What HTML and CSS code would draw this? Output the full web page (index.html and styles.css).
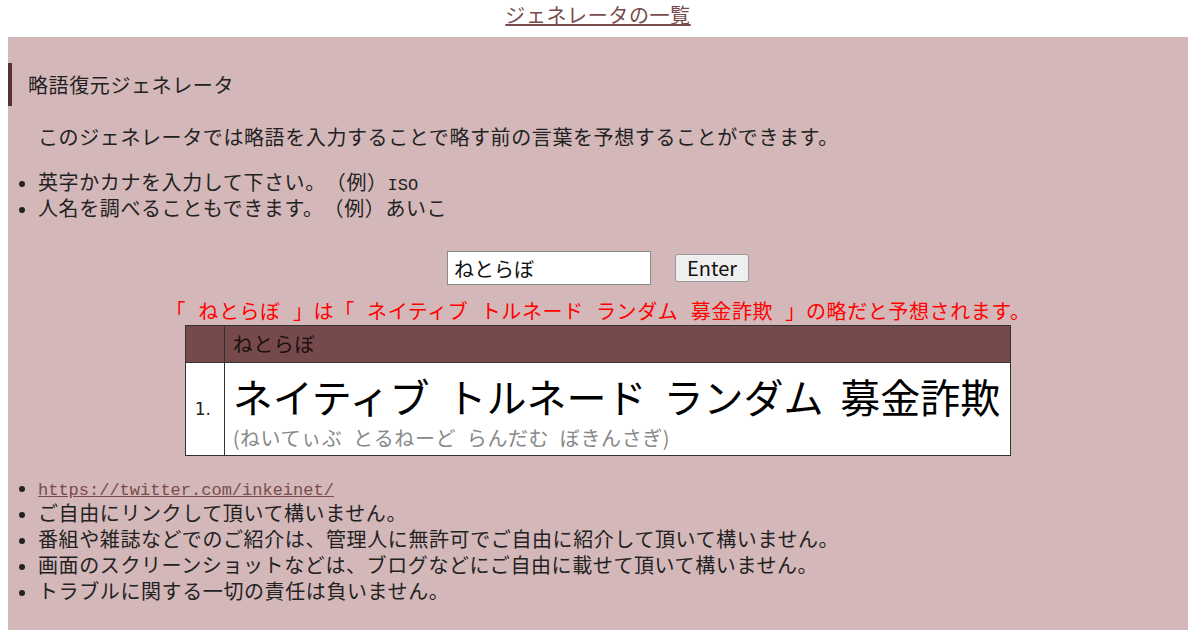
FILE: index.html
```html
<!DOCTYPE html>
<html lang="ja">
<head>
    <meta charset="UTF-8">
    <meta name="viewport" content="width=device-width, initial-scale=1.0">
    <title>略語復元ジェネレータ</title>
    <link rel="stylesheet" href="styles.css">
</head>
<body>
    <div class="top-nav">
        <a href="#">ジェネレータの一覧</a>
    </div>

    <div class="main">
        <h1 class="title">略語復元ジェネレータ</h1>

        <p class="lead">このジェネレータでは略語を入力することで略す前の言葉を予想することができます。</p>

        <ul class="notes">
            <li>英字かカナを入力して下さい。（例）<span class="mono">ISO</span></li>
            <li>人名を調べることもできます。（例）あいこ</li>
        </ul>

        <form class="search" onsubmit="return false;">
            <input type="text" class="word" value="ねとらぼ">
            <button type="submit">Enter</button>
        </form>

        <div class="result-msg">「 ねとらぼ 」は「 ネイティブ トルネード ランダム 募金詐欺 」の略だと予想されます。</div>

        <table class="result">
            <tr class="head">
                <th></th>
                <th>ねとらぼ</th>
            </tr>
            <tr>
                <td class="num">1.</td>
                <td class="answer">
                    <div class="big">ネイティブ トルネード ランダム 募金詐欺</div>
                    <div class="kana">(ねいてぃぶ とるねーど らんだむ ぼきんさぎ)</div>
                </td>
            </tr>
        </table>

        <ul class="notes footer">
            <li><a href="#" class="mono">https://twitter.com/inkeinet/</a></li>
            <li>ご自由にリンクして頂いて構いません。</li>
            <li>番組や雑誌などでのご紹介は、管理人に無許可でご自由に紹介して頂いて構いません。</li>
            <li>画面のスクリーンショットなどは、ブログなどにご自由に載せて頂いて構いません。</li>
            <li>トラブルに関する一切の責任は負いません。</li>
        </ul>
    </div>
</body>
</html>
```

FILE: styles.css
```css
body {
    margin: 0 12px 0 8px;
    font-family: "Noto Sans CJK JP", sans-serif;
    font-size: 20px;
    line-height: 26px;
    color: #222;
    background: #fff;
    text-spacing-trim: space-all;
    letter-spacing: 0.6px;
    word-spacing: 0.28em;
}

a {
    color: #7a4b4b;
}

.top-nav {
    text-align: center;
    height: 30px;
    line-height: 30px;
    margin-bottom: 7px;
}

.main {
    background: #d4b8b9;
    padding: 26px 0 40px 0;
}

.title {
    font-size: 20px;
    font-weight: normal;
    margin: 0;
    height: 43px;
    line-height: 43px;
    padding-left: 16px;
    border-left: 4px solid #5a3232;
}

.lead {
    margin: 18px 0 19px 0;
    padding-left: 30px;
}

.notes {
    margin: 0;
    padding-left: 30px;
}

.notes li::marker {
    font-size: 16px;
}

.mono {
    font-family: "Liberation Mono", monospace;
    font-size: 17px;
    line-height: 1;
    letter-spacing: 0;
    word-spacing: 0;
}

.search {
    display: flex;
    justify-content: center;
    align-items: center;
    gap: 24px;
    margin: 30px 0 13px 0;
    height: 34px;
}

.word {
    width: 204px;
    height: 34px;
    box-sizing: border-box;
    border: 1px solid #888;
    padding: 0 6px;
    font-family: inherit;
    font-size: 20px;
    color: #111;
    background: #fff;
}

.search button {
    height: 28px;
    width: 74px;
    box-sizing: border-box;
    border: 1px solid #999;
    border-radius: 3px;
    background: #efefef;
    font-family: inherit;
    font-size: 20px;
    line-height: 24px;
    padding: 0;
    color: #111;
}

.result-msg {
    text-align: center;
    color: #f00;
    height: 26px;
    word-spacing: 0.36em;
}

.result {
    margin: 1px auto 18px auto;
    border-collapse: collapse;
    background: #fff;
}

.result th,
.result td {
    border: 1px solid #333;
    text-align: left;
    font-weight: normal;
}

.result .head th {
    background: #764a4b;
    height: 36px;
    padding: 0 10px 0 8px;
    color: #1a1010;
}

.result .head th:first-child {
    width: 20px;
}

.num {
    padding: 0 9px;
    font-family: "DejaVu Sans", sans-serif;
    font-size: 17px;
    letter-spacing: 0;
    vertical-align: middle;
}

.answer {
    padding: 4px 10px 4px 8px;
}

.big {
    font-size: 40px;
    line-height: 58px;
    color: #000;
    letter-spacing: 0;
    word-spacing: 0.2em;
}

.kana {
    color: #888;
    line-height: 26px;
}
```
